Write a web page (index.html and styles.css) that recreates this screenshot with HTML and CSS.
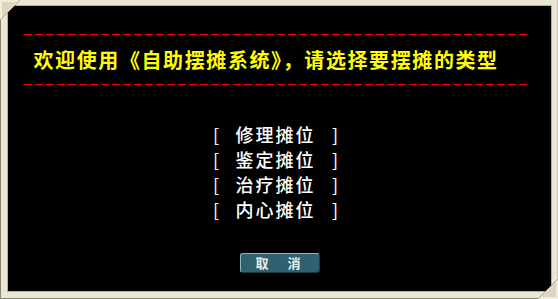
FILE: index.html
```html
<!DOCTYPE html>
<html lang="zh-CN">
<head>
  <meta charset="UTF-8">
  <title>自助摆摊系统</title>
  <link rel="stylesheet" href="styles.css">
</head>
<body>
  <div class="frame">
    <svg class="corner tl" width="20" height="20" viewBox="0 0 20 20"><path d="M0 0H20L0 20Z" fill="#f1ecdc"/><path d="M2 2H17L2 17Z" fill="#ddd5bf"/><path d="M20 0L0 20" stroke="#a9a08a" stroke-width="1"/></svg>
    <svg class="corner br" width="20" height="20" viewBox="0 0 20 20"><path d="M20 20H0L20 0Z" fill="#f1ecdc"/><path d="M18 18H3L18 3Z" fill="#ddd5bf"/><path d="M0 20L20 0" stroke="#a9a08a" stroke-width="1"/></svg>
    <div class="panel">
      <svg class="dash" width="504" height="2" viewBox="0 0 504 2" shape-rendering="crispEdges"><line x1="0" y1="0.5" x2="504" y2="0.5" stroke="#ff0000" stroke-width="1" stroke-dasharray="8 3"/></svg>
      <div class="title">欢迎使用《自助摆摊系统》，请选择要摆摊的类型</div>
      <svg class="dash" width="504" height="2" viewBox="0 0 504 2" shape-rendering="crispEdges"><line x1="0" y1="0.5" x2="504" y2="0.5" stroke="#ff0000" stroke-width="1" stroke-dasharray="8 3"/></svg>
      <ul class="menu">
        <li><span>[</span><span class="item">修理摊位</span><span>]</span></li>
        <li><span>[</span><span class="item">鉴定摊位</span><span>]</span></li>
        <li><span>[</span><span class="item">治疗摊位</span><span>]</span></li>
        <li><span>[</span><span class="item">内心摊位</span><span>]</span></li>
      </ul>
      <button class="cancel-btn">取　消</button>
    </div>
  </div>
</body>
</html>
```

FILE: styles.css
```css
html, body {
  margin: 0;
  padding: 0;
}

body {
  width: 558px;
  height: 299px;
  overflow: hidden;
  background: #000;
  font-family: "Noto Sans CJK SC", "Noto Sans", sans-serif;
}

.frame {
  position: relative;
  box-sizing: border-box;
  width: 558px;
  height: 299px;
  padding: 6px 7px 8px 8px;
  background: #ebe5d3;
  box-shadow: inset 1px 0 0 #8c8676, inset 0 -1px 0 #8c8676, inset -1px 0 0 #cfc8b4;
}

.corner {
  position: absolute;
  display: block;
}

.corner.tl {
  top: 0;
  left: 0;
}

.corner.br {
  right: 0;
  bottom: 0;
}

.panel {
  height: 100%;
  background: #000;
  box-shadow: 0 0 0 1px #b6ae98;
  display: flex;
  flex-direction: column;
  align-items: center;
}

.dash {
  flex: none;
  display: block;
  margin-left: -8px;
}

.dash:first-child {
  margin-top: 28px;
}

.title {
  flex: none;
  width: 504px;
  margin-left: -8px;
  padding: 0 0 0 10px;
  box-sizing: border-box;
  height: 48px;
  line-height: 48px;
  font-size: 20px;
  font-weight: bold;
  letter-spacing: 1.6px;
  color: #ffff00;
  white-space: nowrap;
}

.menu {
  list-style: none;
  margin: 36px 0 0 -8px;
  padding: 0;
}

.menu li {
  display: flex;
  justify-content: space-between;
  width: 125px;
  height: 25px;
  line-height: 25px;
  font-size: 18px;
  color: #fff;
}

.menu .item {
  letter-spacing: 2px;
  font-weight: 500;
}

.cancel-btn {
  margin-top: 31px;
  width: 80px;
  height: 20px;
  padding: 0;
  border: 1px solid #8fb6bd;
  border-right-color: #1d3a41;
  border-bottom-color: #1d3a41;
  border-radius: 3px;
  background: #2f6270;
  color: #e8eef0;
  font-family: inherit;
  font-size: 13px;
  font-weight: bold;
  line-height: 18px;
  letter-spacing: 3px;
}
```
